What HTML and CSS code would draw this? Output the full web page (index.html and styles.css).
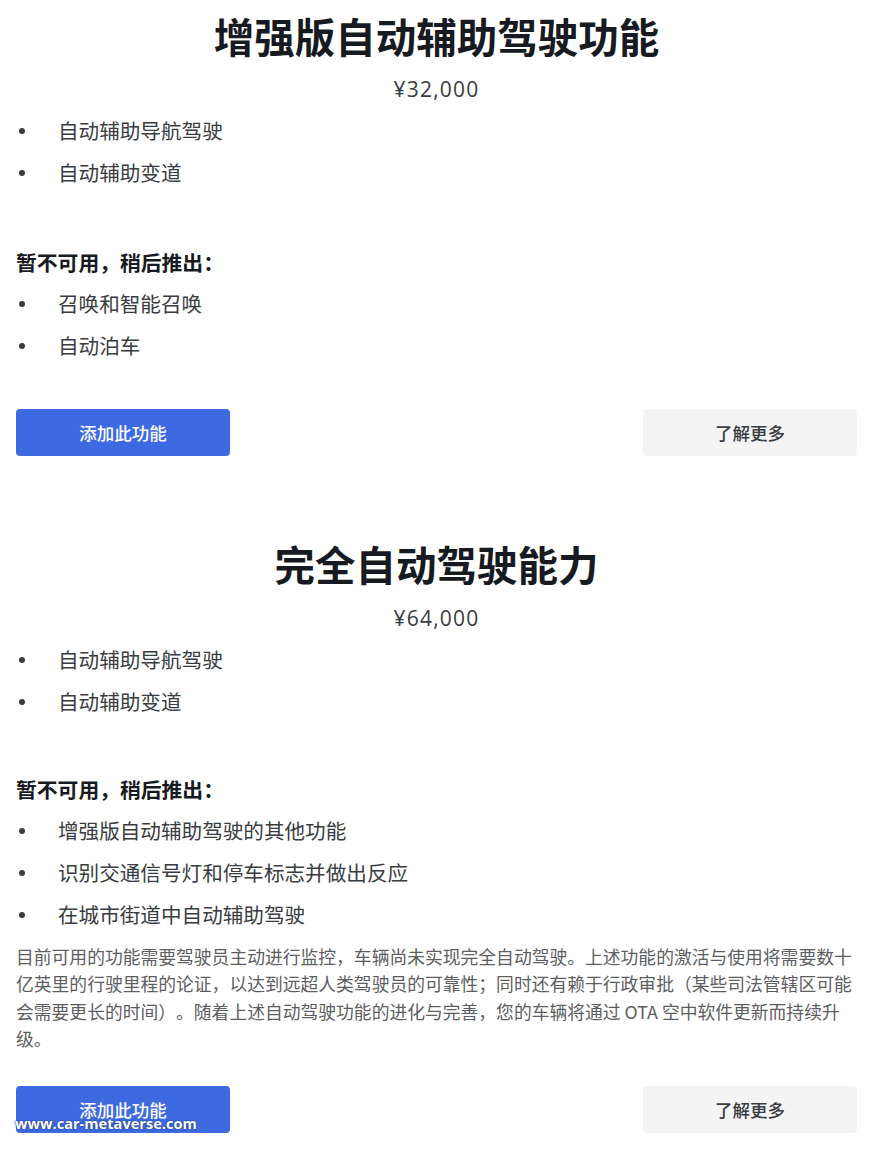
FILE: index.html
```html
<!DOCTYPE html>
<html lang="zh-CN">
<head>
<meta charset="utf-8">
<title>自动辅助驾驶</title>
<link rel="stylesheet" href="styles.css">
</head>
<body>
<div class="page">
  <section class="pack first">
    <h2 class="title">增强版自动辅助驾驶功能</h2>
    <div class="price">¥32,000</div>
    <ul class="feats">
      <li>自动辅助导航驾驶</li>
      <li>自动辅助变道</li>
    </ul>
    <h3 class="later">暂不可用，稍后推出：</h3>
    <ul class="feats tight">
      <li>召唤和智能召唤</li>
      <li>自动泊车</li>
    </ul>
    <div class="actions">
      <button class="btn primary">添加此功能</button>
      <button class="btn secondary">了解更多</button>
    </div>
  </section>

  <section class="pack second">
    <h2 class="title">完全自动驾驶能力</h2>
    <div class="price">¥64,000</div>
    <ul class="feats">
      <li>自动辅助导航驾驶</li>
      <li>自动辅助变道</li>
    </ul>
    <h3 class="later">暂不可用，稍后推出：</h3>
    <ul class="feats tight">
      <li>增强版自动辅助驾驶的其他功能</li>
      <li>识别交通信号灯和停车标志并做出反应</li>
      <li>在城市街道中自动辅助驾驶</li>
    </ul>
    <p class="note">目前可用的功能需要驾驶员主动进行监控，车辆尚未实现完全自动驾驶。上述功能的激活与使用将需要数十亿英里的行驶里程的论证，以达到远超人类驾驶员的可靠性；同时还有赖于行政审批（某些司法管辖区可能会需要更长的时间）。随着上述自动驾驶功能的进化与完善，您的车辆将通过 OTA 空中软件更新而持续升级。</p>
    <div class="actions last">
      <button class="btn primary">添加此功能</button>
      <button class="btn secondary">了解更多</button>
      <span class="watermark">www.car-metaverse.com</span>
    </div>
  </section>
</div>
</body>
</html>
```
FILE: styles.css
```css
* { box-sizing: border-box; }
html, body {
  margin: 0;
  padding: 0;
  background: #ffffff;
}
body {
  font-family: "Noto Sans CJK SC", "Noto Sans", sans-serif;
  color: #393c41;
  text-spacing-trim: space-all;
}
.page {
  width: 841px;
  margin-left: 16px;
}
.pack.first { padding-top: 11px; }
.pack.second { padding-top: 83px; }
.title {
  margin: 0;
  font-size: 40.5px;
  line-height: 50px;
  font-weight: 700;
  color: #171a20;
  text-align: center;
}
.price {
  margin-top: 14px;
  font-family: "Open Sans", "Noto Sans", sans-serif;
  font-size: 21px;
  line-height: 28px;
  font-weight: 500;
  letter-spacing: 1.2px;
  text-align: center;
  color: #393c41;
}
.second .price { margin-top: 15px; }
.feats {
  list-style: none;
  margin: 6px 0 0 0;
  padding: 0;
}
.feats.tight { margin-top: 5px; }
.feats li {
  position: relative;
  padding-left: 42px;
  font-size: 20.6px;
  line-height: 42px;
  color: #393c41;
}
.feats li::before {
  content: "";
  position: absolute;
  left: 3px;
  top: 19px;
  width: 6px;
  height: 6px;
  border-radius: 50%;
  background: #393c41;
}
.later {
  margin: 54px 0 0 0;
  font-size: 20.8px;
  line-height: 30px;
  font-weight: 700;
  color: #171a20;
}
.second .later { margin-top: 52px; }
.actions {
  margin-top: 43px;
  display: flex;
  justify-content: space-between;
  position: relative;
}
.actions.last { margin-top: 34px; }
.btn {
  width: 214px;
  height: 47px;
  border: none;
  border-radius: 4px;
  font-family: "Noto Sans CJK SC", "Noto Sans", sans-serif;
  font-size: 17.5px;
  font-weight: 500;
  padding: 0;
}
.btn.primary {
  background: #3e6ae1;
  color: #ffffff;
}
.btn.secondary {
  background: #f4f4f4;
  color: #393c41;
}
.note {
  margin: 8px 0 0 0;
  font-size: 17.8px;
  line-height: 27.3px;
  color: #5c5e62;
}
.watermark {
  position: absolute;
  left: -1px;
  top: 27px;
  font-family: "Open Sans", "Noto Sans", sans-serif;
  font-size: 14.6px;
  line-height: 20px;
  font-weight: 700;
  color: #ffffff;
  text-shadow: 0 0 2px #2a3a70, 0 0 1px #2a3a70;
}
```
